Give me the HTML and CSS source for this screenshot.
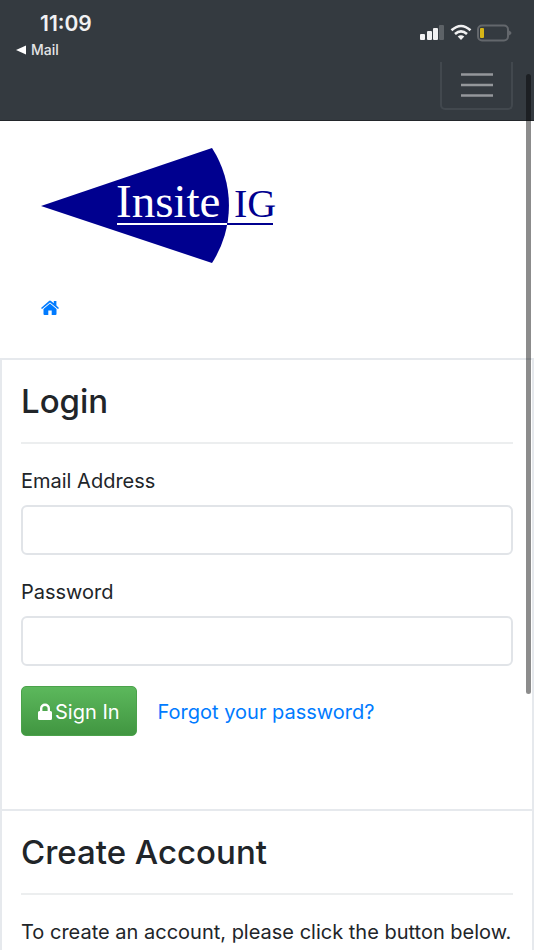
FILE: index.html
```html
<!DOCTYPE html>
<html lang="en">
<head>
    <meta charset="UTF-8">
    <meta name="viewport" content="width=device-width, initial-scale=1.0">
    <title>Insite IG - Login</title>
    <link rel="stylesheet" href="styles.css">
</head>
<body>
    <header class="topbar">
        <div class="status-bar">
            <div class="status-left">
                <div class="clock">11:09</div>
                <a class="back-link" href="#">
                    <svg width="10" height="10" viewBox="0 0 10 10"><path d="M0 5L10 0.5V9.5Z" fill="#fff"/></svg>
                    Mail
                </a>
            </div>
            <svg class="status-icons" width="94" height="18" viewBox="0 0 94 18">
                <!-- Signal -->
                <g fill="#f1f1f2">
                    <rect x="0" y="10" width="5" height="6" rx="1"/>
                    <rect x="7" y="7" width="5" height="9" rx="1"/>
                    <rect x="13" y="4" width="5" height="12" rx="1"/>
                    <rect x="19" y="1" width="5" height="15" rx="1" opacity="0.22"/>
                </g>
                <!-- Wifi -->
                <g fill="none" stroke="#f1f1f2" stroke-width="2.6">
                    <path d="M31.500 6.300Q41 -2.300 50.500 6.300"/>
                    <path d="M35 10Q41 4.700 47 10"/>
                </g>
                <path d="M37.700 12.600Q41 10 44.300 12.600L41 16Z" fill="#f1f1f2"/>
                <!-- Battery -->
                <rect x="58" y="1.500" width="30" height="15" rx="4" fill="none" stroke="#63676c" stroke-width="2"/>
                <path d="M89 6.500Q94 9 89 11.500Z" fill="#63676c"/>
                <rect x="60" y="4" width="4" height="10" rx="1" fill="#d6b516"/>
            </svg>
        </div>
        <nav class="navbar">
            <button class="navbar-toggler" type="button" aria-label="Toggle navigation">
                <svg width="32" height="26" viewBox="0 0 32 26"><path d="M0 2.500H32M0 13H32M0 23.500H32" stroke="#94979b" stroke-width="2.500"/></svg>
            </button>
        </nav>
    </header>

    <div class="brand">
        <svg class="logo" width="236" height="116" viewBox="0 0 236 116" role="img" aria-label="Insite IG">
            <path d="M0 58L171 0A106 106 0 0 1 171 115Z" fill="#00008f"/>
            <text class="logo-text" x="75" y="69" font-size="47" fill="#fff">Insite</text>
            <text class="logo-text" x="193" y="69" font-size="40" fill="#00008f">IG</text>
            <path d="M76 76H186" stroke="#fff" stroke-width="2"/>
            <path d="M186 76H232" stroke="#00008f" stroke-width="2"/>
        </svg>
        <a class="home-link" href="#" aria-label="Home">
            <svg width="18" height="15" viewBox="0 0 18 15" fill="#007bff">
                <path d="M9 3.500L2.500 9V14Q2.500 15 3.500 15H7.300V10.500H10.700V15H14.500Q15.500 15 15.500 14V9Z"/>
                <path d="M0 8L8 0.900Q9 0.100 10 0.900L12.800 3.300V1H15.400V5.500L18 8L17 9.100L9 2.400L1 9.100Z"/>
            </svg>
        </a>
    </div>

    <main>
        <section class="card login-card">
            <h2>Login</h2>
            <hr>
            <form>
                <div class="form-group">
                    <label for="email">Email Address</label>
                    <input type="email" id="email">
                </div>
                <div class="form-group">
                    <label for="password">Password</label>
                    <input type="password" id="password">
                </div>
                <div class="actions">
                    <button class="btn-success" type="submit">
                        <svg width="14" height="18" viewBox="0 0 14 18"><path d="M2 8V5.500A5 5 0 0 1 12 5.500V8H12.500Q14 8 14 9.500V15.500Q14 17 12.500 17H1.500Q0 17 0 15.500V9.500Q0 8 1.500 8ZM4.400 8H9.600V5.500A2.600 2.600 0 0 0 4.400 5.500Z" fill="#fff" fill-rule="evenodd"/></svg>
                        Sign In
                    </button>
                    <a class="forgot-link" href="#">Forgot your password?</a>
                </div>
            </form>
        </section>

        <section class="card">
            <h2>Create Account</h2>
            <hr>
            <p>To create an account, please click the button below.</p>
        </section>
    </main>

    <div class="scroll-thumb"></div>
</body>
</html>
```
FILE: styles.css
```css
* { margin: 0; padding: 0; box-sizing: border-box; }

body {
    font-family: Inter, "Liberation Sans", sans-serif;
    font-size: 20px;
    line-height: 30px;
    color: #212529;
    background: #fff;
    min-height: 100vh;
    display: flex;
    flex-direction: column;
}

svg { display: block; }

a { color: #007bff; text-decoration: none; }

.topbar {
    background: #343a40;
    border-bottom: 1px solid #23272b;
}

.status-bar {
    display: flex;
    justify-content: space-between;
    height: 62px;
    padding: 12px 20px 0 16px;
}

.clock {
    padding-left: 24px;
    font-size: 21px;
    font-weight: 600;
    line-height: 24px;
    color: #f1f1f2;
}

.back-link {
    display: flex;
    align-items: center;
    gap: 5px;
    padding-top: 4px;
    font-size: 14px;
    font-weight: 500;
    line-height: 20px;
    color: #e4e5e6;
}

.status-icons { margin-top: 12px; }

/* the toggler runs up under the status bar */
.navbar {
    display: flex;
    justify-content: flex-end;
    padding: 0 21px 10px;
}

.navbar-toggler {
    display: flex;
    justify-content: center;
    width: 73px;
    height: 48px;
    padding-top: 10px;
    background: none;
    border: 2px solid #42484e;
    border-top: none;
    border-radius: 0 0 5px 5px;
}

.brand { padding: 27px 41px 42px; }

.logo-text { font-family: "Liberation Serif", serif; }

.home-link {
    display: inline-block;
    height: 16px;
    margin-top: 36px;
    vertical-align: top;
}

main {
    flex: 1;
    display: flex;
    flex-direction: column;
}

.card {
    padding: 20px 19px 0;
    border: 2px solid #e6e9ed;
    border-bottom: none;
}

.login-card { padding-bottom: 73px; }

.card:last-child { flex: 1; }

h2 {
    font-size: 33px;
    font-weight: 500;
    line-height: 42px;
}

hr {
    margin: 20px 0;
    border: none;
    border-top: 2px solid #eceeef;
}

.form-group { margin-bottom: 20px; }

label {
    display: block;
    padding-top: 2px;
    margin-bottom: 9px;
}

.card p { padding-top: 2px; }

input {
    display: block;
    width: 100%;
    height: 50px;
    padding: 8px 15px;
    font: inherit;
    color: #495057;
    background: #fff;
    border: 2px solid #e1e4e8;
    border-radius: 6px;
}

.actions {
    display: flex;
    align-items: center;
    gap: 21px;
}

.btn-success {
    display: flex;
    align-items: center;
    gap: 3px;
    height: 50px;
    padding: 2px 16px 0;
    font: inherit;
    color: #fff;
    background: linear-gradient(#5cb85c, #419641);
    border: 1px solid #4ba24b;
    border-radius: 5px;
}

.forgot-link { padding-top: 2px; }

.scroll-thumb {
    position: absolute;
    top: 74px;
    right: 3px;
    width: 5px;
    height: 620px;
    border-radius: 3px;
    background: rgba(0, 0, 0, 0.45);
}
```
